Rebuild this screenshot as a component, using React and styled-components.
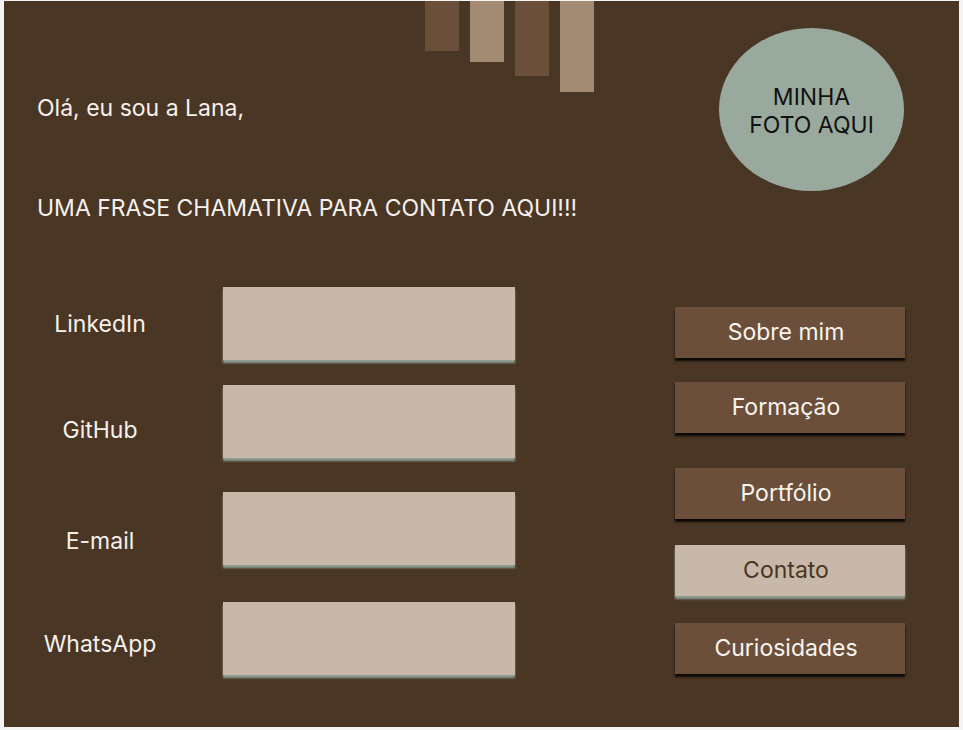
import React from "react";
import styled, { createGlobalStyle } from "styled-components";

const GlobalStyle = createGlobalStyle`
  body {
    margin: 0;
    background: #f4f4f4;
    font-family: Inter, "Noto Sans", sans-serif;
  }
`;

const Frame = styled.div`
  width: 955px;
  height: 726px;
  margin: 1px 0 0 4px;
  background-color: #4a3624;
  box-sizing: border-box;
  display: flex;
  flex-direction: column;
  color: #f6f1ec;
`;

const Header = styled.header`
  display: flex;
  padding: 0 55px 0 33px;
`;

const HeaderText = styled.div`
  flex: 1;
  display: flex;
  flex-direction: column;
`;

const TopLine = styled.div`
  display: flex;
  align-items: flex-start;
`;

const Greeting = styled.p`
  width: 388px;
  margin: 93px 0 0;
  font-size: 23px;
  line-height: 28px;
`;

const Bars = styled.div`
  display: flex;
  align-items: flex-start;
  gap: 11px;
`;

const Bar = styled.div`
  width: 34px;
  height: ${(props) => props.$height}px;
  background-color: ${(props) => (props.$light ? "#a38a73" : "#6b4f3a")};
`;

const Headline = styled.p`
  margin: 72px 0 0;
  font-size: 23px;
  line-height: 28px;
`;

const Photo = styled.div`
  width: 185px;
  height: 163px;
  margin-top: 27px;
  border-radius: 50%;
  background-color: #9aa99d;
  color: #111;
  font-size: 23px;
  line-height: 28px;
  display: flex;
  align-items: center;
  justify-content: center;
  text-align: center;
  padding-top: 3px;
  box-sizing: border-box;
`;

const Body = styled.main`
  display: flex;
  justify-content: space-between;
  padding: 0 54px 0 16px;
  margin-top: 65px;
`;

const Form = styled.div`
  display: flex;
  flex-direction: column;
`;

const FieldRow = styled.div`
  display: flex;
  align-items: center;
  margin-top: ${(props) => props.$top}px;
`;

const Label = styled.span`
  width: 160px;
  margin-right: 43px;
  text-align: center;
  font-size: 23px;
  transform: translateY(${(props) => props.$shift || 0}px);
`;

const Field = styled.div`
  width: 292px;
  height: 73px;
  background-color: #c8b8a9;
  box-shadow: 0 3px 2px #8e9e93;
`;

const Nav = styled.nav`
  display: flex;
  flex-direction: column;
  padding-top: 20px;
`;

const NavButton = styled.button`
  width: 230px;
  height: 51px;
  margin-top: ${(props) => props.$top}px;
  border: none;
  font-family: Inter, "Noto Sans", sans-serif;
  font-size: 23px;
  padding: 0 8px 2px 0;
  background-color: ${(props) => (props.$active ? "#c8b8a9" : "#6b4f3a")};
  color: ${(props) => (props.$active ? "#4a3523" : "#f8f4f0")};
  box-shadow: ${(props) =>
    props.$active ? "0 3px 2px #8e9e93" : "0 3px 2px rgba(0, 0, 0, 0.85)"};
`;

const fields = [
  { label: "LinkedIn", top: 0, shift: 0 },
  { label: "GitHub", top: 25, shift: 8 },
  { label: "E-mail", top: 34, shift: 12 },
  { label: "WhatsApp", top: 37, shift: 5 },
];

const links = [
  { label: "Sobre mim", top: 0 },
  { label: "Formação", top: 24 },
  { label: "Portfólio", top: 35 },
  { label: "Contato", top: 26, active: true },
  { label: "Curiosidades", top: 27 },
];

const App = () => {
  return (
    <>
      <GlobalStyle />
      <Frame>
        <Header>
          <HeaderText>
            <TopLine>
              <Greeting>Olá, eu sou a Lana,</Greeting>
              <Bars>
                <Bar $height={50} />
                <Bar $height={61} $light />
                <Bar $height={75} />
                <Bar $height={91} $light />
              </Bars>
            </TopLine>
            <Headline>UMA FRASE CHAMATIVA PARA CONTATO AQUI!!!</Headline>
          </HeaderText>
          <Photo>
            MINHA
            <br />
            FOTO AQUI
          </Photo>
        </Header>
        <Body>
          <Form>
            {fields.map((f) => (
              <FieldRow key={f.label} $top={f.top}>
                <Label $shift={f.shift}>{f.label}</Label>
                <Field />
              </FieldRow>
            ))}
          </Form>
          <Nav>
            {links.map((l) => (
              <NavButton key={l.label} $top={l.top} $active={l.active}>
                {l.label}
              </NavButton>
            ))}
          </Nav>
        </Body>
      </Frame>
    </>
  );
};

export default App;
